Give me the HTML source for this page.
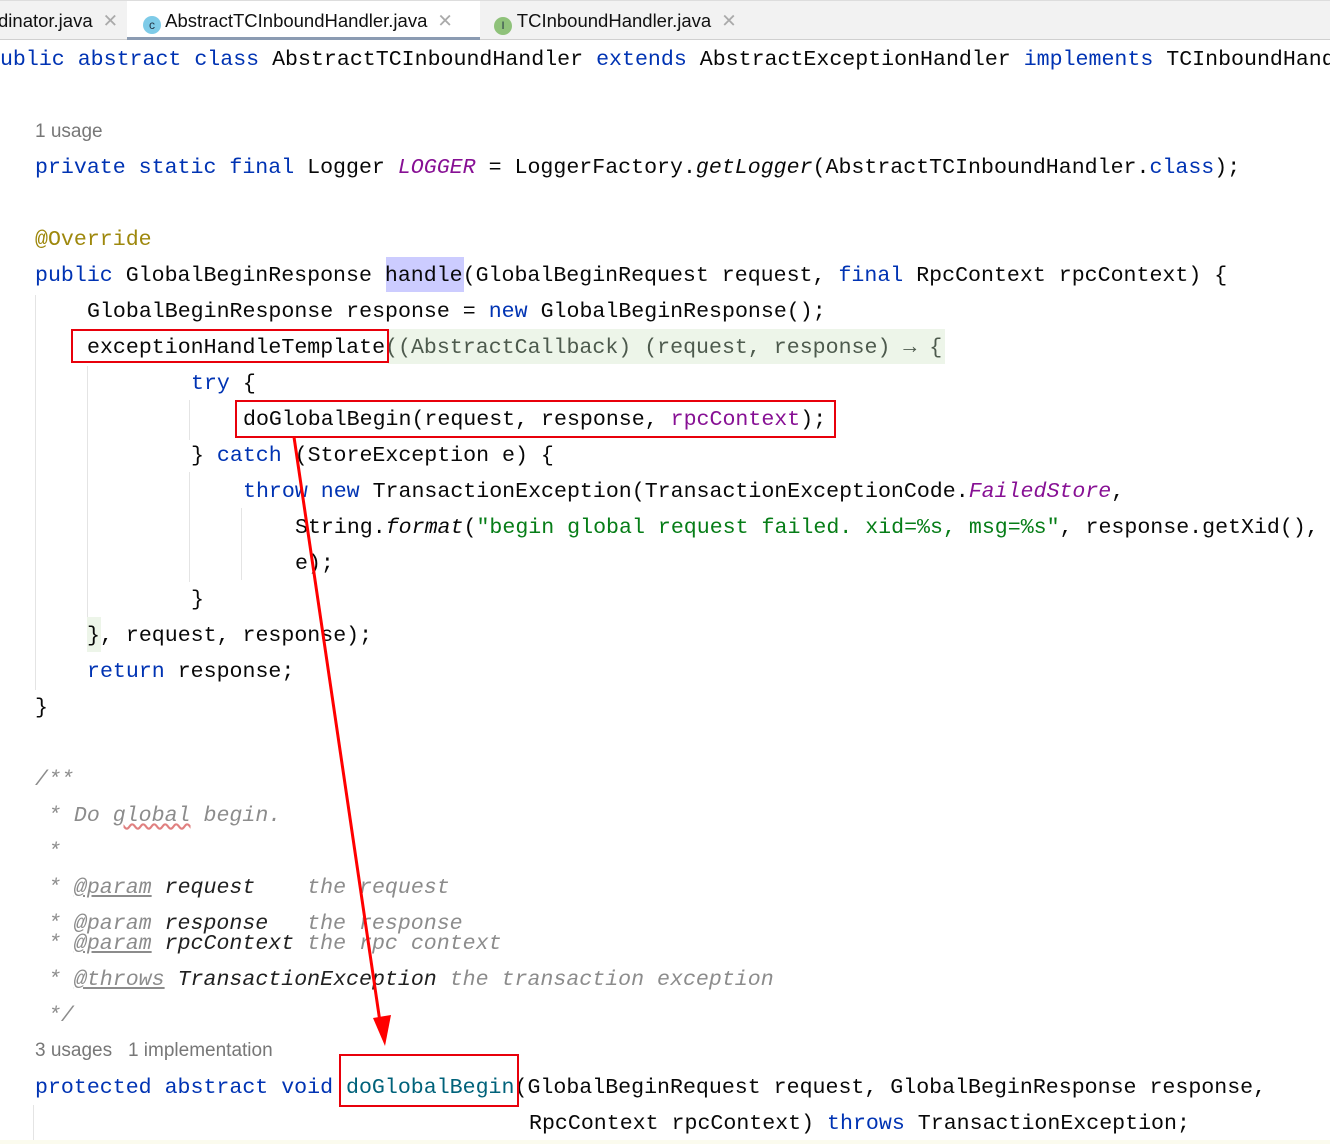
<!DOCTYPE html>
<html><head><meta charset="utf-8"><style>
body{margin:0;width:1330px;height:1144px;overflow:hidden;background:#fff;position:relative;font-family:"Liberation Mono",monospace;}
#wrap{position:absolute;left:0;top:0;width:1330px;height:1144px;overflow:hidden;}
.tabs{position:absolute;left:0;top:0;width:1330px;height:40px;background:#f2f2f2;border-bottom:1px solid #d0d0d0;border-top:1px solid #ddd;box-sizing:border-box;font-family:"Liberation Sans",sans-serif;font-size:18.5px;color:#111;}
.tab{position:absolute;top:0;height:39px;line-height:40px;white-space:nowrap;}
.x{color:#aaa;margin-left:10px;}
.l{position:absolute;height:36px;line-height:36px;font-size:21.6px;white-space:pre;color:#080808;}
.k{color:#0033b3}.s{color:#067d17}.p{color:#871094}.c{color:#8c8c8c;font-style:italic}.a{color:#9e880d}.m{color:#00627a}
.i{font-style:italic}.u{text-decoration:underline}
.hint{position:absolute;font-family:"Liberation Sans",sans-serif;font-size:19px;color:#777;}
.g{position:absolute;width:1px;background:#e4e4e4;}
.box{position:absolute;border:2px solid #e8000b;box-sizing:border-box;}
</style></head><body><div id="wrap">
<div class="tabs">
 <div class="tab" style="left:-2px">dinator.java<span class="x">✕</span></div>
 <div class="tab" style="left:127px;width:353px;background:#fff;border-bottom:3px solid #8b9bb2;box-sizing:border-box;padding-left:16px;"><span style="display:inline-block;width:18px;height:18px;border-radius:50%;background:#7ecbe8;font-size:12px;line-height:18px;text-align:center;vertical-align:-2px;color:#234">c</span> AbstractTCInboundHandler.java<span class="x">✕</span></div>
 <div class="tab" style="left:494px"><span style="display:inline-block;width:18px;height:18px;border-radius:50%;background:#8fc27a;font-size:11px;line-height:18px;text-align:center;vertical-align:-2px;color:#234">I</span> TCInboundHandler.java<span class="x">✕</span></div>
</div>

<div class="g" style="left:35px;top:295px;height:395px"></div>
<div class="g" style="left:87px;top:366px;height:255px"></div>
<div class="g" style="left:189px;top:400px;height:40px"></div>
<div class="g" style="left:189px;top:472px;height:110px"></div>
<div class="g" style="left:241px;top:508px;height:72px"></div>
<div class="g" style="left:33px;top:1105px;height:39px"></div>
<div style="position:absolute;left:0;top:1140px;width:1330px;height:4px;background:#fbfbee"></div>

<div style="position:absolute;left:388px;top:329px;width:557px;height:35px;background:#edf5e9"></div>
<div style="position:absolute;left:87px;top:617px;width:14px;height:35px;background:#edf5e9"></div>
<div style="position:absolute;left:386px;top:257px;width:78px;height:35px;background:#ccccff"></div>

<div class="l" style="left:-13px;top:42px"><span class="k">public abstract class</span> AbstractTCInboundHandler <span class="k">extends</span> AbstractExceptionHandler <span class="k">implements</span> TCInboundHandler {</div>
<div class="hint" style="left:35px;top:121px">1 usage</div>
<div class="l" style="left:35px;top:150px"><span class="k">private static final</span> Logger <span class="p i">LOGGER</span> = LoggerFactory.<span class="i">getLogger</span>(AbstractTCInboundHandler.<span class="k">class</span>);</div>
<div class="l" style="left:35px;top:222px"><span class="a">@Override</span></div>
<div class="l" style="left:35px;top:258px"><span class="k">public</span> GlobalBeginResponse handle(GlobalBeginRequest request, <span class="k">final</span> RpcContext rpcContext) {</div>
<div class="l" style="left:87px;top:294px">GlobalBeginResponse response = <span class="k">new</span> GlobalBeginResponse();</div>
<div class="l" style="left:87px;top:330px">exceptionHandleTemplate<span style="color:#4d5a4d">((AbstractCallback) (request, response) → {</span></div>
<div class="l" style="left:191px;top:366px"><span class="k">try</span> {</div>
<div class="l" style="left:243px;top:402px">doGlobalBegin(request, response, <span class="p">rpcContext</span>);</div>
<div class="l" style="left:191px;top:438px">} <span class="k">catch</span> (StoreException e) {</div>
<div class="l" style="left:243px;top:474px"><span class="k">throw new</span> TransactionException(TransactionExceptionCode.<span class="p i">FailedStore</span>,</div>
<div class="l" style="left:295px;top:510px">String.<span class="i">format</span>(<span class="s">"begin global request failed. xid=%s, msg=%s"</span>, response.getXid(), e.getMessage()),</div>
<div class="l" style="left:295px;top:546px">e);</div>
<div class="l" style="left:191px;top:582px">}</div>
<div class="l" style="left:87px;top:618px">}, request, response);</div>
<div class="l" style="left:87px;top:654px"><span class="k">return</span> response;</div>
<div class="l" style="left:35px;top:690px">}</div>

<div class="l c" style="left:35px;top:762px">/**</div>
<div class="l c" style="left:35px;top:798px"> * Do <span style="text-decoration:underline wavy #e08080">global</span> begin.</div>
<div class="l c" style="left:35px;top:834px"> *</div>
<div class="l c" style="left:35px;top:870px"> * <span class="u">@param</span> <span style="color:#202020">request</span>    the request</div>
<div class="l c" style="left:35px;top:906px"> * @param <span style="color:#202020">response</span>   the response</div>
<div class="l c" style="left:35px;top:926px"> * <span class="u">@param</span> <span style="color:#202020">rpcContext</span> the rpc context</div>
<div class="l c" style="left:35px;top:962px"> * <span class="u">@throws</span> <span style="color:#202020">TransactionException</span> the transaction exception</div>
<div class="l c" style="left:35px;top:998px"> */</div>
<div class="hint" style="left:35px;top:1040px">3 usages&nbsp;&nbsp;&nbsp;1 implementation</div>
<div class="l" style="left:35px;top:1070px"><span class="k">protected abstract void</span> <span class="m">doGlobalBegin</span>(GlobalBeginRequest request, GlobalBeginResponse response,</div>
<div class="l" style="left:529px;top:1106px">RpcContext rpcContext) <span class="k">throws</span> TransactionException;</div>

<div class="box" style="left:71px;top:329px;width:318px;height:34px"></div>
<div class="box" style="left:235px;top:400px;width:601px;height:38px"></div>
<div class="box" style="left:339px;top:1054px;width:180px;height:53px"></div>
<svg style="position:absolute;left:0;top:0" width="1330" height="1144">
<line x1="294" y1="437" x2="380" y2="1022" stroke="#f00" stroke-width="3"/>
<polygon points="373,1018 391,1015 385,1046" fill="#f00"/>
</svg>
</div></body></html>
